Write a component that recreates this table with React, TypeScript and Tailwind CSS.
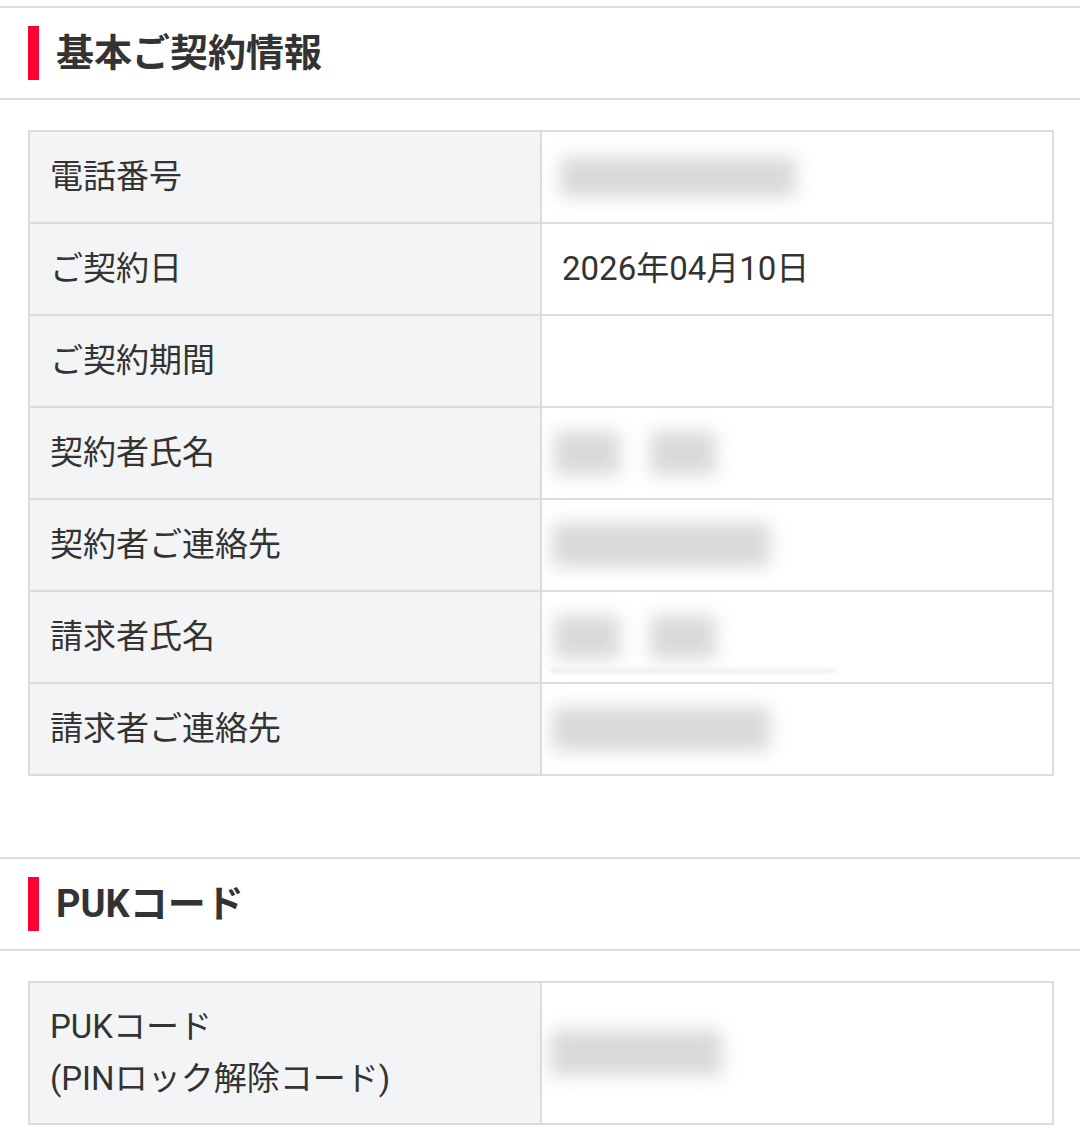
import React from "react";

const font = { fontFamily: 'Roboto, "Noto Sans CJK JP", sans-serif' };

function Header({ title }: { title: string }) {
  return (
    <div className="border-t-2 border-b-2 border-[#dddddd] h-[94px] flex items-center pl-[28px]">
      <div className="w-[11px] h-[54px] bg-[#ff0033]" />
      <h2 className="ml-[17px] text-[38px] font-bold text-[#333333] leading-none">{title}</h2>
    </div>
  );
}

function Blur({ w, h = 40, ml = 0 }: { w: number; h?: number; ml?: number }) {
  return <div className="bg-[#d9d9d9] blur-[9px] rounded-sm" style={{ width: w, height: h, marginLeft: ml }} />;
}

type Row = { label: React.ReactNode; value: React.ReactNode; h?: string };

function Table({ rows }: { rows: Row[] }) {
  return (
    <div className="ml-[28px] w-[1026px] border-2 border-[#dcdcdc]">
      {rows.map((r, i) => (
        <div key={i} className={`flex ${i > 0 ? "border-t-2 border-[#dcdcdc]" : ""}`}>
          <div className={`w-[512px] shrink-0 border-r-2 border-[#dcdcdc] bg-[#f3f4f6] flex items-center pl-[20px] text-[33px] text-[#333333] ${r.h ?? "h-[90px]"}`}>
            {r.label}
          </div>
          <div className="flex-1 flex items-center text-[33px] text-[#333333] relative">{r.value}</div>
        </div>
      ))}
    </div>
  );
}

function NameBlur({ line }: { line?: boolean }) {
  return (
    <div className="relative w-full h-full flex items-center">
      <div className="flex items-center ml-[12px] gap-[30px]">
        <Blur w={66} h={44} />
        <Blur w={66} h={44} />
      </div>
      {line ? <div className="absolute left-[8px] bottom-[10px] w-[285px] h-[3px] bg-[#e6e6e6] blur-[2px]" /> : null}
    </div>
  );
}

export default function App() {
  const rows1: Row[] = [
    { label: "電話番号", value: <Blur w={236} h={40} ml={18} /> },
    { label: "ご契約日", value: <span className="pl-[20px]">2026年04月10日</span> },
    { label: "ご契約期間", value: null },
    { label: "契約者氏名", value: <NameBlur /> },
    { label: "契約者ご連絡先", value: <Blur w={218} h={44} ml={10} /> },
    { label: "請求者氏名", value: <NameBlur line /> },
    { label: "請求者ご連絡先", value: <Blur w={218} h={44} ml={10} /> },
  ];
  const rows2: Row[] = [
    {
      label: (
        <div className="leading-[52px]">
          PUKコード
          <br />
          (PINロック解除コード)
        </div>
      ),
      value: <Blur w={172} h={46} ml={8} />,
      h: "h-[140px]",
    },
  ];
  return (
    <div className="bg-white w-[1080px] min-h-[1139px] overflow-hidden" style={font}>
      <div className="h-[6px]" />
      <Header title="基本ご契約情報" />
      <div className="h-[30px]" />
      <Table rows={rows1} />
      <div className="h-[81px]" />
      <Header title="PUKコード" />
      <div className="h-[30px]" />
      <Table rows={rows2} />
    </div>
  );
}
